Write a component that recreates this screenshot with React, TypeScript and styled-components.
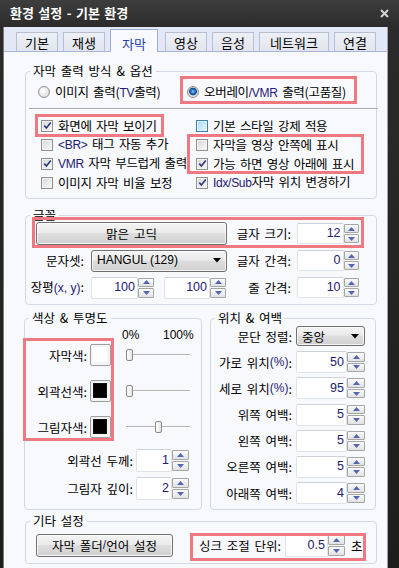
import React from "react";
import styled, { createGlobalStyle } from "styled-components";

const FONT = `"Noto Sans CJK KR", "Noto Sans", "DejaVu Sans", sans-serif`;
const LATIN = `"Liberation Sans", "Noto Sans CJK KR", sans-serif`;
const MARK = "#f07880";
const BTN_BG = "linear-gradient(180deg, #f3f3f3 0%, #ebebeb 46%, #dddddd 50%, #d0d0d0 100%)";

const Global = createGlobalStyle`
  html, body { margin: 0; padding: 0; background: #1b1b1b; }
  body { font-family: ${FONT}; font-size: 12.5px; color: #000; word-spacing: 2px; }
  *, *::before, *::after { box-sizing: border-box; }
`;

const Window = styled.div`
  width: 399px;
  height: 568px;
  overflow: hidden;
  display: flex;
  flex-direction: column;
  background: linear-gradient(180deg, #3e3e3e 0px, #2b2b2b 27px, #1d1d1d 100%);
`;

const TitleBar = styled.div`
  flex: none;
  height: 27px;
  display: flex;
  align-items: center;
  justify-content: space-between;
  padding: 0 10px 1px 10px;
`;

const Title = styled.div`
  color: #fff;
  font-weight: 700;
  font-size: 13px;
  line-height: 16px;
  word-spacing: 1.5px;
`;

const Client = styled.div`
  flex: 1;
  min-height: 0;
  margin: 0 11px 0 3px;
  border-left: 1px solid #7b7b7b;
  border-right: 1px solid #a3a3a3;
  background: #f8f9fd;
  display: flex;
  flex-direction: column;
`;

const TabStrip = styled.div`
  flex: none;
  height: 25px;
  display: flex;
  align-items: flex-end;
  gap: 5px;
  padding-left: 12px;
  background: #e3e8f8;
  border-bottom: 1px solid #a7b4d6;
`;

const Tab = styled.div<{ $w: number; $active?: boolean }>`
  flex: none;
  width: ${(p) => p.$w}px;
  height: ${(p) => (p.$active ? 23 : 19)}px;
  margin-bottom: ${(p) => (p.$active ? -1 : 0)}px;
  margin-right: ${(p) => (p.$active ? 2 : 0)}px;
  padding-top: ${(p) => (p.$active ? 4 : 0)}px;
  border: 1px solid ${(p) => (p.$active ? "#9eaed3" : "#b7bfd3")};
  border-bottom: none;
  background: ${(p) => (p.$active ? "#f8f9fd" : "linear-gradient(180deg, #eef0f6, #e2e5ee)")};
  color: ${(p) => (p.$active ? "#2342a6" : "#000")};
  display: flex;
  align-items: center;
  justify-content: center;
  font-size: 13px;
  line-height: 15px;
  position: relative;
  z-index: ${(p) => (p.$active ? 1 : 0)};
`;

const Panel = styled.div`
  flex: 1;
  padding: 12px 10px 0 21px;
  display: flex;
  flex-direction: column;
`;

const Group = styled.fieldset<{ $w: number; $mt?: number }>`
  margin: ${(p) => p.$mt ?? 0}px 0 0 0;
  padding: 0;
  min-width: 0;
  width: ${(p) => p.$w}px;
  flex: none;
  border: 1px solid #d3d9e4;
  border-radius: 4px;
`;

const Legend = styled.legend`
  margin-left: 4px;
  padding: 0 3px;
  line-height: 14px;
`;

const Body = styled.div<{ $pad: string; $mt?: number }>`
  padding: ${(p) => p.$pad};
  margin-top: ${(p) => p.$mt ?? 0}px;
  display: flex;
  flex-direction: column;
`;

const Mark = styled.div<{ $t: number; $r: number; $b: number; $l: number }>`
  position: relative;
  &::after {
    content: "";
    position: absolute;
    pointer-events: none;
    top: ${(p) => -p.$t}px;
    right: ${(p) => -p.$r}px;
    bottom: ${(p) => -p.$b}px;
    left: ${(p) => -p.$l}px;
    border: 3px solid ${MARK};
    z-index: 3;
  }
`;

const Lat = styled.span<{ $plain?: boolean }>`
  font-family: ${LATIN};
  font-size: 12px;
  word-spacing: 0;
  color: ${(p) => (p.$plain ? "#000" : "#1e2070")};
`;

/* ---------- radios / checkboxes ---------- */

const RadioGrid = styled.div`
  display: grid;
  grid-template-columns: 149px 1fr;
  height: 20px;
  padding-left: 12px;
`;

const Option = styled.div`
  display: flex;
  align-items: center;
  gap: 5px;
  height: 100%;
  white-space: nowrap;
  line-height: 15px;
  letter-spacing: -0.3px;
`;

const RadioDot = styled.span<{ $on?: boolean }>`
  flex: none;
  width: 12px;
  height: 12px;
  border-radius: 50%;
  border: 1px solid #8e8f8f;
  background: ${(p) =>
    p.$on
      ? "radial-gradient(circle at 50% 45%, #8fd0f8 0px, #2a74c0 2px, #0f4a8c 3.5px, #d9d9d9 4.2px, #f7f7f7 100%)"
      : "radial-gradient(circle at 40% 40%, #ffffff 0px, #d3d3d3 100%)"};
`;

const Separator = styled.div`
  height: 1px;
  margin: 6px -2px 0 3px;
  background: #a9a9a9;
`;

const CheckCols = styled.div`
  display: grid;
  grid-template-columns: 155px 1fr;
  margin-top: 7px;
  padding-left: 15px;
`;

const CheckCol = styled.div`
  display: flex;
  flex-direction: column;
`;

const CheckRow = styled(Option)`
  height: 19px;
`;

const Box = styled.span<{ $hot?: boolean }>`
  flex: none;
  width: 12px;
  height: 12px;
  border: 1px solid ${(p) => (p.$hot ? "#3c7fb1" : "#8f8f8f")};
  background: ${(p) =>
    p.$hot
      ? "linear-gradient(135deg, #a9dcf6, #e6f5fd)"
      : "linear-gradient(135deg, #d6d6d6, #fbfbfb)"};
  box-shadow: inset 0 0 0 1px ${(p) => (p.$hot ? "#def3fd" : "#f3f3f3")};
  display: flex;
  align-items: center;
  justify-content: center;
`;

const Check = ({ on, hot, children }: { on?: boolean; hot?: boolean; children: React.ReactNode }) => (
  <CheckRow>
    <Box $hot={hot}>
      {on && (
        <svg width="9" height="9" viewBox="0 0 9 9">
          <path d="M1.3 4.6 L3.4 7 L7.8 1.4" fill="none" stroke="#2b3a78" strokeWidth="1.6" />
        </svg>
      )}
    </Box>
    <span>{children}</span>
  </CheckRow>
);

/* ---------- controls ---------- */

const PushButton = styled.div<{ $w?: number }>`
  flex: none;
  ${(p) => (p.$w ? `width: ${p.$w}px;` : "")}
  height: 23px;
  border: 1px solid #707070;
  border-radius: 3px;
  background: ${BTN_BG};
  box-shadow: inset 0 0 0 1px rgba(255, 255, 255, 0.75);
  display: flex;
  align-items: center;
  justify-content: center;
  line-height: 15px;
  white-space: nowrap;
`;

const Combo = styled.div<{ $h: number; $w?: number }>`
  height: ${(p) => p.$h}px;
  ${(p) => (p.$w ? `width: ${p.$w}px; flex: none;` : "")}
  border: 1px solid #707070;
  border-radius: 3px;
  background: ${BTN_BG};
  box-shadow: inset 0 0 0 1px rgba(255, 255, 255, 0.75);
  display: flex;
  align-items: center;
  justify-content: space-between;
  padding: 0 5px 0 5px;
  line-height: 15px;
  white-space: nowrap;
`;

const ComboArrow = () => (
  <svg width="8" height="5" viewBox="0 0 8 5">
    <path d="M0 0 H8 L4 4.5 Z" fill="#000" />
  </svg>
);

const SpinWrap = styled.div<{ $h: number }>`
  flex: none;
  display: flex;
  height: ${(p) => p.$h}px;
`;

const SpinField = styled.div<{ $w: number }>`
  width: ${(p) => p.$w}px;
  border: 1px solid #dfe3ea;
  border-top-color: #cdd1d9;
  border-radius: 2px;
  background: #fff;
  display: flex;
  align-items: center;
  justify-content: flex-end;
  padding-right: 2px;
  color: #1e2070;
  font-family: ${LATIN};
  font-size: 12.5px;
  line-height: 15px;
`;

const SpinBtns = styled.div<{ $w: number }>`
  width: ${(p) => p.$w}px;
  display: flex;
  flex-direction: column;
  gap: 1px;
  padding: 1px 0;
`;

const SpinBtn = styled.div`
  flex: 1;
  border: 1px solid #a6a6a6;
  border-radius: 1px;
  background: linear-gradient(180deg, #fbfbfb, #e2e2e2);
  display: flex;
  align-items: center;
  justify-content: center;
`;

const Arrow = ({ up }: { up?: boolean }) => (
  <svg width="7" height="4" viewBox="0 0 7 4">
    <path d={up ? "M0 4 H7 L3.5 0 Z" : "M0 0 H7 L3.5 4 Z"} fill="#5266b4" />
  </svg>
);

const Spin = ({ value, w, bw = 16, h = 22 }: { value: string; w: number; bw?: number; h?: number }) => (
  <SpinWrap $h={h}>
    <SpinField $w={w}>{value}</SpinField>
    <SpinBtns $w={bw}>
      <SpinBtn>
        <Arrow up />
      </SpinBtn>
      <SpinBtn>
        <Arrow />
      </SpinBtn>
    </SpinBtns>
  </SpinWrap>
);

const Label = styled.span<{ $w: number; $pr?: number }>`
  flex: none;
  width: ${(p) => p.$w}px;
  padding-right: ${(p) => p.$pr ?? 0}px;
  display: flex;
  justify-content: flex-end;
  white-space: nowrap;
  line-height: 13px;
`;

/* ---------- font group ---------- */

const FONT_COLS = "56px 136px 60px 64px";

const FontGrid = styled.div`
  display: grid;
  grid-template-columns: ${FONT_COLS};
  column-gap: 4px;
  grid-template-rows: 23px 23px 23px;
  row-gap: 4px;
  align-items: center;
`;

const FontRow = styled(Mark)`
  grid-column: 1 / -1;
  display: grid;
  grid-template-columns: ${FONT_COLS};
  column-gap: 4px;
  align-items: center;
  height: 23px;
`;

const GridLabel = styled.span<{ $pr?: number }>`
  justify-self: end;
  padding-right: ${(p) => p.$pr ?? 0}px;
  white-space: nowrap;
  line-height: 15px;
`;

const WideButton = styled(PushButton)`
  grid-column: 1 / 3;
  margin-left: 5px;
`;

const RightCell = styled.div`
  margin-left: 2px;
`;

const PairCell = styled.div`
  display: flex;
  gap: 10px;
`;

/* ---------- color group ---------- */

const SplitRow = styled.div`
  display: flex;
  margin-top: 6px;
  margin-left: -1px;
  gap: 8px;
  align-items: stretch;
`;

const PercentHead = styled.div`
  display: flex;
  padding-left: 97px;
  height: 14px;
  line-height: 14px;
  font-family: ${LATIN};
  font-size: 12px;
  word-spacing: 0;
`;

const PercentCell = styled.span<{ $w?: number }>`
  ${(p) => (p.$w ? `width: ${p.$w}px;` : "")}
`;

const ColorRows = styled(Mark)`
  margin-top: 2px;
  display: flex;
  flex-direction: column;
  gap: 14px;
`;

const ColorRow = styled.div`
  display: flex;
  align-items: center;
  height: 22px;
`;

const Swatch = styled.div`
  flex: none;
  width: 21px;
  height: 22px;
  margin-left: 3px;
  border: 1px solid #9d9d9d;
  border-radius: 2px;
  background: #f4f4f4;
  padding: 2px 3px 3px 2px;
`;

const SwatchFill = styled.div<{ $c: string }>`
  width: 100%;
  height: 100%;
  background: ${(p) => p.$c};
  border: 1px solid ${(p) => (p.$c === "#fff" ? "#ffffff" : "#111")};
`;

const Slider = styled.div`
  position: relative;
  flex: none;
  width: 64px;
  height: 12px;
  margin-left: 15px;
  &::before {
    content: "";
    position: absolute;
    left: 0;
    right: 0;
    top: 5px;
    height: 2px;
    border-top: 1px solid #b4b4b4;
    border-bottom: 1px solid #ffffff;
  }
`;

const Thumb = styled.span`
  position: absolute;
  top: 0;
  width: 7px;
  height: 12px;
  border: 1px solid #8a8a8a;
  border-radius: 2px;
  background: linear-gradient(90deg, #ffffff, #e4e4e4);
`;

const SpinRows = styled.div<{ $mt: number; $gap: number }>`
  margin-top: ${(p) => p.$mt}px;
  display: flex;
  flex-direction: column;
  gap: ${(p) => p.$gap}px;
`;

const FieldRow = styled.div<{ $h: number; $gap: number }>`
  display: flex;
  align-items: center;
  height: ${(p) => p.$h}px;
  gap: ${(p) => p.$gap}px;
`;

/* ---------- misc group ---------- */

const MiscRow = styled.div`
  display: flex;
  align-items: center;
  height: 23px;
`;

const SyncMark = styled(Mark)`
  width: 166px;
  margin-left: 27px;
  display: flex;
  align-items: center;
  gap: 4px;
  height: 23px;
`;

const Unit = styled.span`
  margin-left: 2px;
  line-height: 15px;
`;

const TABS = [
  { label: "기본", w: 42 },
  { label: "재생", w: 42 },
  { label: "자막", w: 48, active: true },
  { label: "영상", w: 42 },
  { label: "음성", w: 42 },
  { label: "네트워크", w: 70 },
  { label: "연결", w: 42 },
];

const COLORS = [
  { label: "자막색:", c: "#fff", pos: 0 },
  { label: "외곽선색:", c: "#000", pos: 0 },
  { label: "그림자색:", c: "#000", pos: 29 },
];

const POSITION: { label: React.ReactNode; value: string }[] = [
  { label: <>가로 위치<Lat>(%)</Lat>:</>, value: "50" },
  { label: <>세로 위치<Lat>(%)</Lat>:</>, value: "95" },
  { label: "위쪽 여백:", value: "5" },
  { label: "왼쪽 여백:", value: "5" },
  { label: "오른쪽 여백:", value: "5" },
  { label: "아래쪽 여백:", value: "4" },
];

export default function App() {
  return (
    <>
      <Global />
      <Window>
        <TitleBar>
          <Title>환경 설정 - 기본 환경</Title>
          <svg width="9" height="9" viewBox="0 0 9 9">
            <path d="M1 1 L8 8 M8 1 L1 8" stroke="#d4d4d4" strokeWidth="2" />
          </svg>
        </TitleBar>
        <Client>
          <TabStrip>
            {TABS.map((t) => (
              <Tab key={t.label} $w={t.w} $active={t.active}>
                {t.label}
              </Tab>
            ))}
          </TabStrip>
          <Panel>
            <Group $w={352}>
              <Legend>자막 출력 방식 &amp; 옵션</Legend>
              <Body $pad="4px 0 6px 0">
                <RadioGrid>
                  <Option>
                    <RadioDot />
                    <span>
                      이미지 출력(<Lat>TV</Lat>출력)
                    </span>
                  </Option>
                  <Mark $t={6} $r={-19} $b={2} $l={7}>
                    <Option>
                      <RadioDot $on />
                      <span>
                        오버레이<Lat>/VMR</Lat> 출력(고품질)
                      </span>
                    </Option>
                  </Mark>
                </RadioGrid>
                <Separator />
                <CheckCols>
                  <CheckCol>
                    <Mark $t={2} $r={-32} $b={2} $l={6}>
                      <Check on>화면에 자막 보이기</Check>
                    </Mark>
                    <Check>
                      <Lat>&lt;BR&gt;</Lat> 태그 자동 추가
                    </Check>
                    <Check on>
                      <Lat>VMR</Lat> 자막 부드럽게 출력
                    </Check>
                    <Check>이미지 자막 비율 보정</Check>
                  </CheckCol>
                  <CheckCol>
                    <Check hot>기본 스타일 강제 적용</Check>
                    <Mark $t={1} $r={-12} $b={1} $l={9}>
                      <Check>자막을 영상 안쪽에 표시</Check>
                      <Check on>가능 하면 영상 아래에 표시</Check>
                    </Mark>
                    <Check on>
                      <Lat>Idx/Sub</Lat>자막 위치 변경하기
                    </Check>
                  </CheckCol>
                </CheckCols>
              </Body>
            </Group>

            <Group $w={352} $mt={9}>
              <Legend>글꼴</Legend>
              <Body $pad="0 12px 5px 5px">
                <FontGrid>
                  <FontRow $t={5} $r={5} $b={3} $l={-1}>
                    <WideButton>맑은 고딕</WideButton>
                    <GridLabel>글자 크기:</GridLabel>
                    <RightCell>
                      <Spin value="12" w={48} h={21} />
                    </RightCell>
                  </FontRow>
                  <GridLabel $pr={3}>문자셋:</GridLabel>
                  <Combo $h={22}>
                    <Lat $plain>HANGUL (129)</Lat>
                    <ComboArrow />
                  </Combo>
                  <GridLabel>글자 간격:</GridLabel>
                  <RightCell>
                    <Spin value="0" w={48} h={21} />
                  </RightCell>
                  <GridLabel $pr={3}>
                    장평<Lat>(x, y)</Lat>:
                  </GridLabel>
                  <PairCell>
                    <Spin value="100" w={47} bw={16} />
                    <Spin value="100" w={46} bw={16} />
                  </PairCell>
                  <GridLabel>줄 간격:</GridLabel>
                  <RightCell>
                    <Spin value="10" w={48} h={21} />
                  </RightCell>
                </FontGrid>
              </Body>
            </Group>

            <SplitRow>
              <Group $w={178}>
                <Legend>색상 &amp; 투명도</Legend>
                <Body $pad="3px 0 9px 0">
                  <PercentHead>
                    <PercentCell $w={41}>0%</PercentCell>
                    <PercentCell>100%</PercentCell>
                  </PercentHead>
                  <ColorRows $t={6} $r={-87} $b={3} $l={2}>
                    {COLORS.map((c) => (
                      <ColorRow key={c.label}>
                        <Label $w={62}>{c.label}</Label>
                        <Swatch>
                          <SwatchFill $c={c.c} />
                        </Swatch>
                        <Slider>
                          <Thumb style={{ left: c.pos }} />
                        </Slider>
                      </ColorRow>
                    ))}
                  </ColorRows>
                  <SpinRows $mt={11} $gap={5}>
                    <FieldRow $h={23} $gap={3}>
                      <Label $w={108}>외곽선 두께:</Label>
                      <Spin value="1" w={36} bw={17} h={23} />
                    </FieldRow>
                    <FieldRow $h={23} $gap={3}>
                      <Label $w={108}>그림자 깊이:</Label>
                      <Spin value="2" w={36} bw={17} h={23} />
                    </FieldRow>
                  </SpinRows>
                </Body>
              </Group>

              <Group $w={166}>
                <Legend>위치 &amp; 여백</Legend>
                <Body $pad="0 9px 4px 0">
                  <SpinRows $mt={0} $gap={4.2}>
                    <FieldRow $h={22} $gap={4}>
                      <Label $w={81}>문단 정렬:</Label>
                      <Combo $h={20} $w={69}>
                        <span>중앙</span>
                        <ComboArrow />
                      </Combo>
                    </FieldRow>
                    {POSITION.map((r, i) => (
                      <FieldRow key={i} $h={22} $gap={4}>
                        <Label $w={81}>{r.label}</Label>
                        <Spin value={r.value} w={51} bw={18} />
                      </FieldRow>
                    ))}
                  </SpinRows>
                </Body>
              </Group>
            </SplitRow>

            <Group $w={352} $mt={4}>
              <Legend>기타 설정</Legend>
              <Body $pad="6px 0 6px 10px">
                <MiscRow>
                  <PushButton $w={137}>
                    자막 폴더<Lat>/</Lat>언어 설정
                  </PushButton>
                  <SyncMark $t={1} $r={0} $b={4} $l={10}>
                    <Label $w={81}>싱크 조절 단위:</Label>
                    <Spin value="0.5" w={43} bw={17} h={23} />
                    <Unit>초</Unit>
                  </SyncMark>
                </MiscRow>
              </Body>
            </Group>
          </Panel>
        </Client>
      </Window>
    </>
  );
}
